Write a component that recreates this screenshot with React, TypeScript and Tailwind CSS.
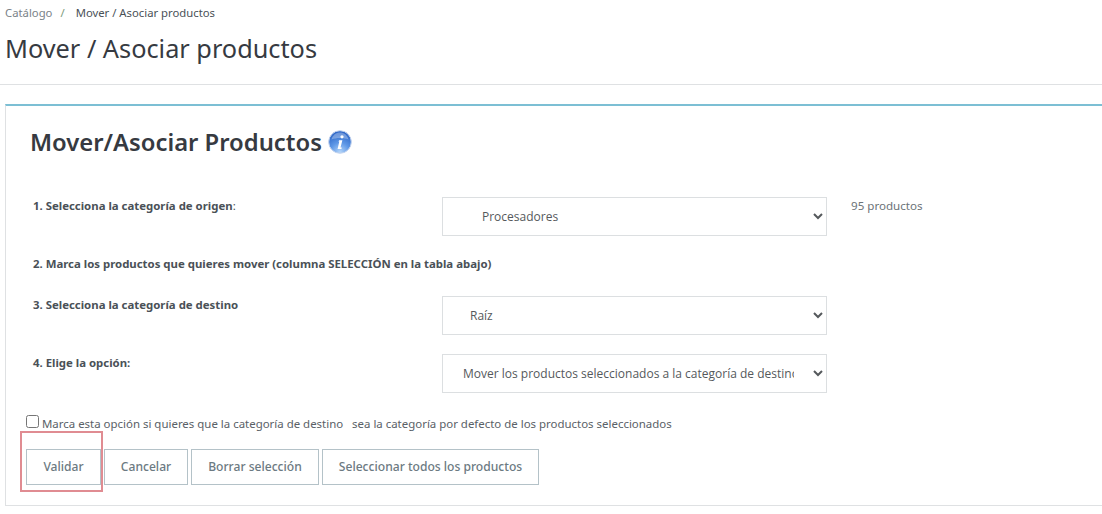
import React from "react";

const InfoIcon = () => (
  <svg width="24" height="24" viewBox="0 0 24 24" className="shrink-0">
    <defs>
      <radialGradient id="infoBg" cx="50%" cy="95%" r="85%">
        <stop offset="0%" stopColor="#b5d6fa" />
        <stop offset="50%" stopColor="#5d97e6" />
        <stop offset="100%" stopColor="#2f68c8" />
      </radialGradient>
    </defs>
    <circle cx="12" cy="12" r="11.3" fill="url(#infoBg)" stroke="#c4d4ee" strokeWidth="1" />
    <path d="M3.5 9.5C4.5 5 8 2.4 12 2.4s7.5 2.6 8.5 7.1c-5-2-12-2-17 0z" fill="#ffffff" opacity="0.3" />
    <circle cx="14" cy="6.8" r="1.6" fill="#ffffff" />
    <path d="M11.2 10.2h3.2l-1.9 7.4h1.3l-.4 1.3H9.6l1.7-7.4h-.9z" fill="#ffffff" />
  </svg>
);

const labelClass = "text-[11.4px] leading-[18px] font-bold text-[#4a5157]";
const selectClass =
  "w-[385px] h-[39px] border border-[#dcdfe1] bg-white text-[12px] text-[#55595c] font-['Open_Sans',sans-serif] outline-none";
const buttonClass =
  "h-[36px] border border-[#b4c2c8] bg-white text-[12.1px] font-medium text-[#6c7a82] flex items-center justify-center";

export default function App() {
  return (
    <div className="w-[1102px] h-[514px] overflow-hidden bg-white font-['Noto_Sans',sans-serif] text-[#363a41]">
      {/* Header */}
      <div className="h-[85px] border-b border-[#dfe1e3] pl-[5px] pt-[5px]">
        <div className="flex items-center text-[11.3px] leading-[16px]">
          <span className="text-[#7a8288]">Catálogo</span>
          <span className="ml-[8px] mr-[11px] text-[#7c9a7a]">/</span>
          <span className="text-[#4a5157]">Mover / Asociar productos</span>
        </div>
        <h1 className="mt-[9px] text-[25.3px] leading-[36px] font-normal text-[#363a41]">
          Mover / Asociar productos
        </h1>
      </div>

      {/* Card */}
      <div className="ml-[5px] mt-[19px] w-[1110px] h-[402px] border border-[#dfe1e3] border-t-2 border-t-[#7cbfd4] pl-[24px]">
        <div className="flex items-center gap-[6px] pt-[17px] h-[55px]">
          <h2 className="text-[23.8px] leading-[32px] font-semibold text-[#363a41]">Mover/Asociar Productos</h2>
          <InfoIcon />
        </div>

        <div className="mt-[36px] flex items-start pl-[3px] h-[39px]">
          <label className={`w-[409px] ${labelClass}`}>
            1. Selecciona la categoría de origen<span className="font-normal">:</span>
          </label>
          <select className={`${selectClass} pl-[35px]`} defaultValue="Procesadores">
            <option>Procesadores</option>
          </select>
          <span className="ml-[24px] text-[11.6px] leading-[18px] text-[#6c7378]">95 productos</span>
        </div>

        <div className={`mt-[19px] pl-[3px] ${labelClass}`}>
          2. Marca los productos que quieres mover (columna SELECCIÓN en la tabla abajo)
        </div>

        <div className="mt-[23px] flex items-start pl-[3px]">
          <label className={`w-[409px] ${labelClass}`}>3. Selecciona la categoría de destino</label>
          <select className={`${selectClass} pl-[23px]`} defaultValue="Raíz">
            <option>Raíz</option>
          </select>
        </div>

        <div className="mt-[19px] flex items-start pl-[3px]">
          <label className={`w-[409px] ${labelClass}`}>4. Elige la opción:</label>
          <select className={`${selectClass} pl-[16px] pr-[16px]`} defaultValue="mover">
            <option value="mover">Mover los productos seleccionados a la categoría de destino</option>
          </select>
        </div>

        <label className="mt-[22px] flex items-center text-[11.44px] leading-[18px] text-[#5a6167] -ml-[4px]">
          <input type="checkbox" className="w-[13px] h-[13px] mr-[3px] -mt-[5px]" />
          Marca esta opción si quieres que la categoría de destino&nbsp;&nbsp;&nbsp;sea la categoría por defecto de los productos seleccionados
        </label>

        <div className="mt-[16px] -ml-[4px] flex gap-[3px]">
          <div className="relative">
            <button className={`${buttonClass} w-[75px]`}>Validar</button>
            <div className="absolute -left-[6px] -top-[18px] w-[83px] h-[61px] border-2 border-[#e08c92]" />
          </div>
          <button className={`${buttonClass} w-[84px]`}>Cancelar</button>
          <button className={`${buttonClass} w-[128px]`}>Borrar selección</button>
          <button className={`${buttonClass} w-[217px]`}>Seleccionar todos los productos</button>
        </div>
      </div>
    </div>
  );
}
